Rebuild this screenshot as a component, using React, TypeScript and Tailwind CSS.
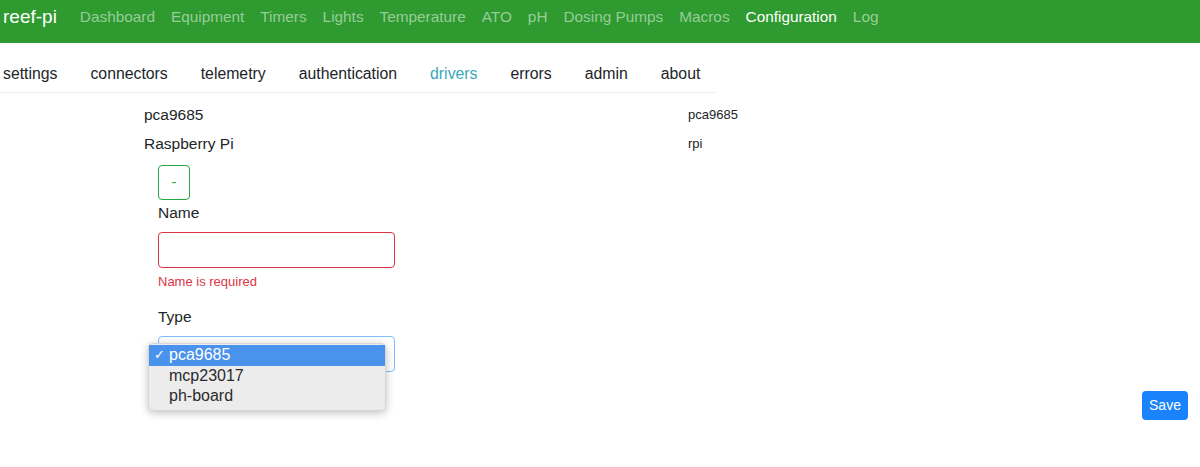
import React from "react";

const navLinks = [
  "Dashboard",
  "Equipment",
  "Timers",
  "Lights",
  "Temperature",
  "ATO",
  "pH",
  "Dosing Pumps",
  "Macros",
  "Configuration",
  "Log",
];

const tabs = [
  "settings",
  "connectors",
  "telemetry",
  "authentication",
  "drivers",
  "errors",
  "admin",
  "about",
];

export default function App() {
  return (
    <div
      className="w-[1200px] h-[467px] bg-white text-[#212529] overflow-hidden"
      style={{ fontFamily: '"Liberation Sans", Arial, sans-serif' }}
    >
      {/* top navbar */}
      <div className="h-[43px] bg-[#2e9a30] flex items-center pl-[3px]">
        <span className="text-white text-[19px] mr-[15px] -mt-[9px]">reef-pi</span>
        <div className="flex items-center -mt-[9px]">
          {navLinks.map((l) => (
            <span
              key={l}
              className={
                "text-[15.35px] px-[8px] " +
                (l === "Configuration" ? "text-white" : "text-[#97cd98]")
              }
            >
              {l}
            </span>
          ))}
        </div>
      </div>

      {/* tabs */}
      <div className="w-[715px] h-[50px] border-b border-[#e9ecef] flex items-center pl-[3px] pt-[12px]">
        {tabs.map((t) => (
          <span
            key={t}
            className={
              "text-[15.8px] mr-[33px] " +
              (t === "drivers" ? "text-[#3aa7bd]" : "text-[#212529]")
            }
          >
            {t}
          </span>
        ))}
      </div>

      {/* drivers list */}
      <div className="pl-[144px] pt-[7px]">
        <div className="flex items-center h-[29px]">
          <span className="w-[544px] text-[15.5px]">pca9685</span>
          <span className="text-[13px]">pca9685</span>
        </div>
        <div className="flex items-center h-[29px]">
          <span className="w-[544px] text-[15.5px]">Raspberry Pi</span>
          <span className="text-[13px]">rpi</span>
        </div>
      </div>

      {/* form */}
      <div className="pl-[158px] pt-[7px]">
        <button className="w-[32px] h-[35px] border border-[#28a745] rounded-[4px] text-[#28a745] text-[15px] flex items-center justify-center">
          -
        </button>
        <div className="text-[15.5px] mt-[1px] h-[24px] leading-[24px]">Name</div>
        <div className="mt-[7px] w-[237px] h-[36px] border border-[#dc3545] rounded-[4px]" />
        <div className="text-[13px] text-[#dc3545] mt-[4px]">Name is required</div>
        <div className="text-[15.5px] mt-[13px] h-[24px] leading-[24px]">Type</div>
        <div className="relative mt-[7px] w-[237px] h-[36px] border border-[#80bdff] rounded-[4px]">
          <div className="absolute left-[-11px] top-[6px] w-[238px] bg-[#ececec] rounded-[5px] shadow-[0_2px_8px_rgba(0,0,0,0.25)] border border-[#d6d6d6] py-[1px] z-10">
            <div className="h-[21px] bg-[#4a93ec] text-white flex items-center text-[16px]">
              <span className="w-[20px] text-center text-[13px]">✓</span>
              <span>pca9685</span>
            </div>
            <div className="h-[20px] flex items-center text-[16px] text-[#2a2a2a] pl-[20px]">
              mcp23017
            </div>
            <div className="h-[20px] flex items-center text-[16px] text-[#2a2a2a] pl-[20px] mb-[3px]">
              ph-board
            </div>
          </div>
        </div>
      </div>

      <div className="flex justify-end pr-[12px] mt-[19px]">
        <button className="w-[46px] h-[29px] bg-[#1a82fb] rounded-[4px] text-white text-[14px]">
          Save
        </button>
      </div>
    </div>
  );
}
